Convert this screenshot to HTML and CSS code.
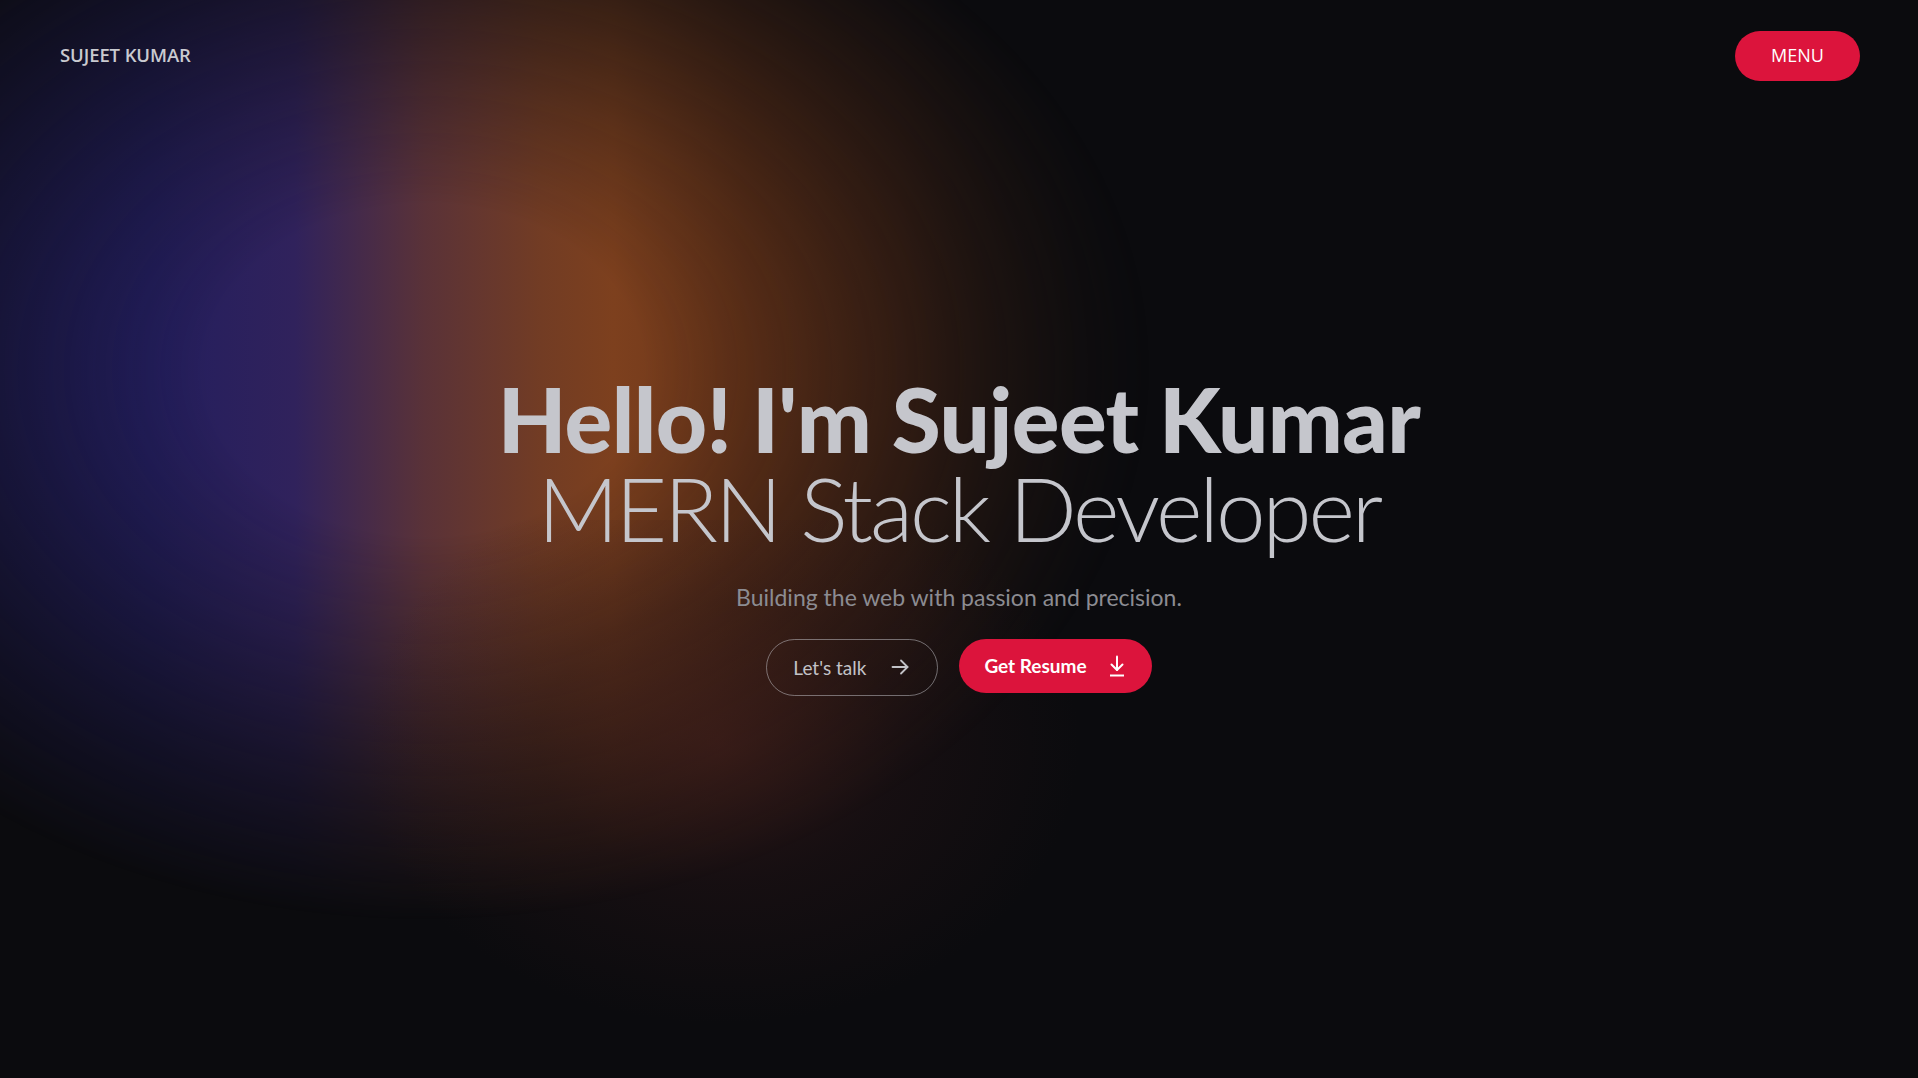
FILE: index.html
```html
<!DOCTYPE html>
<html lang="en">
<head>
<meta charset="utf-8">
<title>Sujeet Kumar</title>
<link rel="stylesheet" href="styles.css">
</head>
<body>
<div class="page">
  <div class="glow glow-main"></div>
  <div class="glow glow-tail"></div>
  <header class="topbar">
    <a class="logo" href="#">SUJEET KUMAR</a>
    <button class="menu-btn">MENU</button>
  </header>
  <main class="hero">
    <h1 class="hero-title">
      <span class="hero-name">Hello! I'm Sujeet Kumar</span>
      <span class="hero-role">MERN Stack Developer</span>
    </h1>
    <p class="hero-sub">Building the web with passion and precision.</p>
    <div class="hero-actions">
      <a class="btn btn-outline" href="#">Let's talk
        <svg class="btn-icon" width="18" height="16" viewBox="0 0 18 16" fill="none" stroke="currentColor" stroke-width="1.8" stroke-linecap="round" stroke-linejoin="round"><path d="M1.5 8H16.5"/><path d="M10 1.5L16.5 8L10 14.5"/></svg>
      </a>
      <a class="btn btn-primary" href="#">Get Resume
        <svg class="btn-icon" width="16" height="22" viewBox="0 0 16 22" fill="none" stroke="currentColor" stroke-width="2" stroke-linecap="round" stroke-linejoin="round"><path d="M8 1.5V15"/><path d="M2.5 9.5L8 15L13.5 9.5"/><path d="M1 20.5H15" stroke-linecap="butt"/></svg>
      </a>
    </div>
  </main>
</div>
</body>
</html>
```
FILE: styles.css
```css
* { box-sizing: border-box; }
html, body { margin: 0; padding: 0; }
body {
  background: #0b0b0e;
  color: #c5c6cc;
  font-family: "Lato", "Open Sans", sans-serif;
  overflow: hidden;
}
.page {
  position: relative;
  width: 100%;
  height: 100vh;
  overflow: hidden;
  background: #0b0b0e;
}
.glow {
  position: absolute;
  pointer-events: none;
  z-index: 0;
}
.glow-main {
  left: -300px;
  top: -180px;
  width: 1450px;
  height: 1100px;
  background: linear-gradient(90deg,
    #1a1848 0%,
    #1e1b54 14%,
    #231e5e 31%,
    #30225c 41%,
    #5a3238 50%,
    #723c24 58%,
    #7d401e 63%,
    #6a3519 72%,
    #582d18 83%,
    #3a2216 93%,
    #1a1412 100%);
  -webkit-mask-image: radial-gradient(ellipse 50% 50% at 50% 50%, #000 30%, rgba(0,0,0,0.7) 52%, rgba(0,0,0,0.35) 75%, transparent 100%);
  mask-image: radial-gradient(ellipse 50% 50% at 50% 50%, #000 30%, rgba(0,0,0,0.7) 52%, rgba(0,0,0,0.35) 75%, transparent 100%);
}
.glow-tail {
  left: 360px;
  top: 520px;
  width: 720px;
  height: 560px;
  background: radial-gradient(ellipse 50% 50% at 50% 40%, rgba(72,32,30,0.5) 0%, rgba(50,24,26,0.28) 50%, rgba(11,11,14,0) 100%);
}
.topbar {
  position: relative;
  z-index: 2;
  display: flex;
  justify-content: space-between;
  align-items: center;
  padding: 31px 58px 0 60px;
}
.logo {
  font-family: "Open Sans", sans-serif;
  font-weight: 600;
  font-size: 18.5px;
  color: #c9cad0;
  text-decoration: none;
  letter-spacing: -0.1px;
  padding-bottom: 3px;
}
.menu-btn {
  width: 125px;
  height: 50px;
  border: none;
  border-radius: 25px;
  background: #dc143c;
  color: #fff;
  font-family: "Open Sans", sans-serif;
  font-size: 18px;
  padding: 0 0 2px;
}
.hero {
  position: relative;
  z-index: 2;
  display: flex;
  flex-direction: column;
  align-items: center;
  text-align: center;
}
.hero-title {
  margin: 293px 0 0;
  font-size: 89px;
  line-height: 89px;
  color: #c5c6cc;
  display: flex;
  flex-direction: column;
  align-items: center;
}
.hero-name {
  font-weight: 900;
  letter-spacing: -0.6px;
}
.hero-role {
  font-weight: 300;
  letter-spacing: -3.1px;
}
.hero-sub {
  margin: 32px 0 0;
  font-size: 23px;
  line-height: 27.6px;
  color: #8c8c92;
}
.hero-actions {
  margin-top: 27px;
  display: flex;
  align-items: flex-start;
  gap: 21px;
}
.btn {
  display: flex;
  align-items: center;
  border-radius: 999px;
  text-decoration: none;
  font-size: 19px;
}
.btn-outline {
  height: 57px;
  padding: 0 28px 0 26px;
  gap: 25px;
  border: 1px solid rgba(200,200,205,0.5);
  color: #c2c2c7;
}
.btn-primary {
  height: 54px;
  padding: 0 27px 0 25px;
  gap: 22px;
  background: #dc143c;
  color: #fff;
  font-weight: 700;
}
.btn-icon { display: block; flex: none; }
```
